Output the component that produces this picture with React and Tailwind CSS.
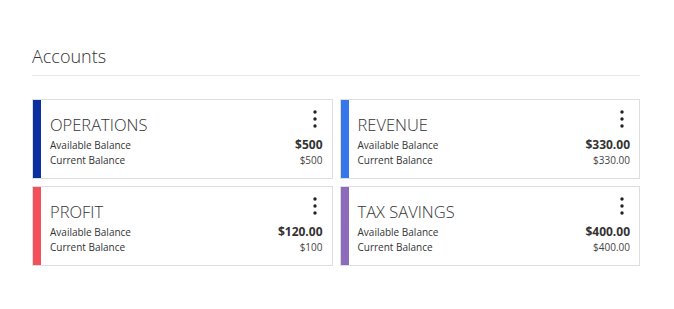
import React from "react";

const accounts = [
  { name: "OPERATIONS", bar: "bg-[#0a2f9f]", avail: "$500", current: "$500" },
  { name: "REVENUE", bar: "bg-[#3577ea]", avail: "$330.00", current: "$330.00" },
  { name: "PROFIT", bar: "bg-[#f3505c]", avail: "$120.00", current: "$100" },
  { name: "TAX SAVINGS", bar: "bg-[#8c6bbd]", avail: "$400.00", current: "$400.00" },
];

function Kebab() {
  return (
    <svg width="4" height="18" viewBox="0 0 4 18" className="block">
      <circle cx="2" cy="2" r="1.7" fill="#222" />
      <circle cx="2" cy="9" r="1.7" fill="#222" />
      <circle cx="2" cy="16" r="1.7" fill="#222" />
    </svg>
  );
}

function Card({ a }) {
  return (
    <div className="flex h-[80px] border border-[#dedede] bg-white">
      <div className={`w-2 shrink-0 ${a.bar}`} />
      <div className="relative flex-1 pl-[9px] pr-[9px] pt-[14px]">
        <div className="absolute right-[15px] top-[10px]">
          <Kebab />
        </div>
        <div className="text-[16.5px] leading-[22px] font-light text-[#333]">{a.name}</div>
        <div className="mt-[2px] flex items-baseline justify-between h-[14px] text-[10px] leading-[14px] text-[#333]">
          <span>Available Balance</span>
          <span className="text-[12px] font-bold text-[#333]">{a.avail}</span>
        </div>
        <div className="mt-[0.5px] flex items-baseline justify-between h-[14px] text-[10px] leading-[14px] text-[#333]">
          <span>Current Balance</span>
          <span className="text-[#444]">{a.current}</span>
        </div>
      </div>
    </div>
  );
}

export default function App() {
  return (
    <div
      className="w-[674px] h-[309px] bg-white px-[32px] pt-[42px] box-border"
      style={{ fontFamily: '"Open Sans", "Noto Sans", sans-serif' }}
    >
      <div className="w-[608px]">
        <div className="text-[18px] leading-[28px] font-light text-[#333] pb-[5px] border-b border-[#e8e8e8]">
          Accounts
        </div>
        <div className="mt-[23px] grid grid-cols-2 gap-x-[7px] gap-y-[7px]">
          {accounts.map((a) => (
            <Card key={a.name} a={a} />
          ))}
        </div>
      </div>
    </div>
  );
}
